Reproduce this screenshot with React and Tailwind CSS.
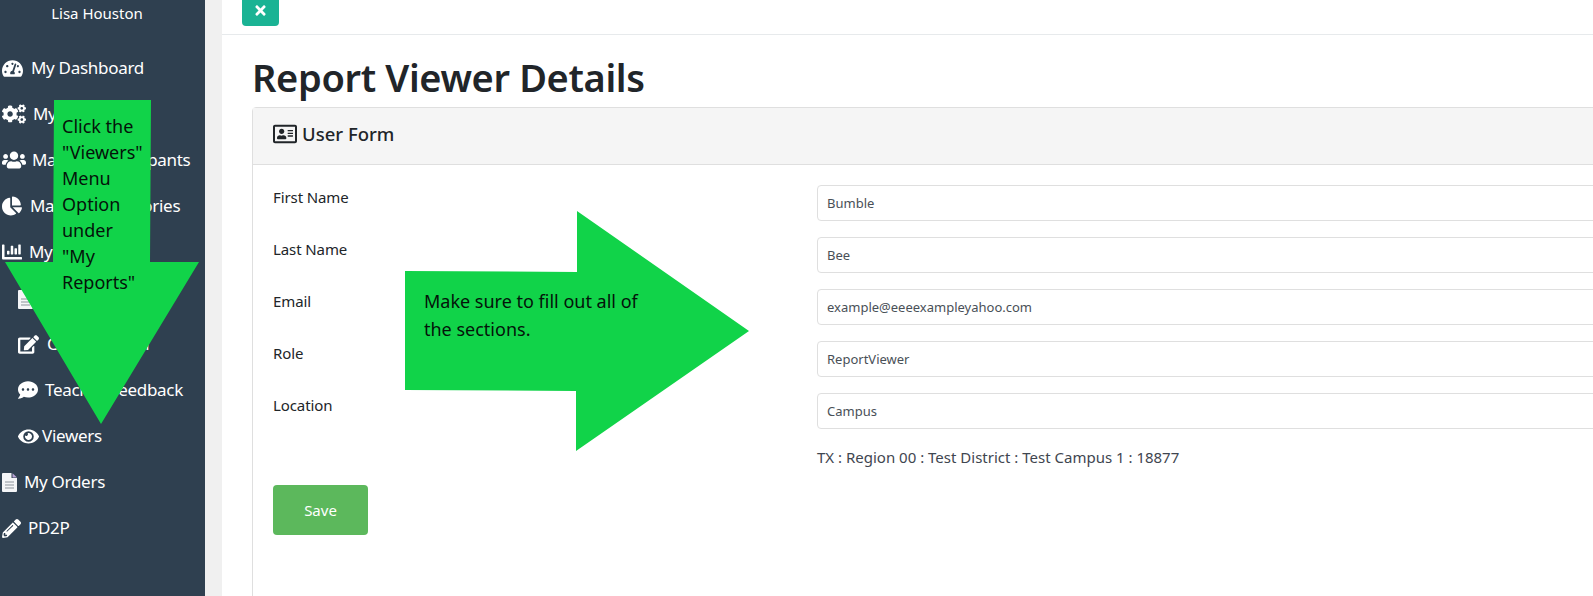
import {
  FaTachometerAlt,
  FaCogs,
  FaUsers,
  FaChartPie,
  FaChartBar,
  FaEdit,
  FaCommentDots,
  FaEye,
  FaPencilAlt,
  FaRegAddressCard,
  FaTimes,
} from "react-icons/fa";

const font = { fontFamily: '"Noto Sans", sans-serif' };

// file glyph in the reference: white sheet, grey lines, purple corner
const DocIcon = ({ className }) => (
  <svg viewBox="0 0 15 19" className={className}>
    <path d="M1 0h8.5v5H15v13a1 1 0 0 1-1 1H1a1 1 0 0 1-1-1V1a1 1 0 0 1 1-1z" fill="#f4f5f7" />
    <path d="M10.5 0.3L15 4.5h-4.5z" fill="#b9a3d6" />
    <path d="M3 9h9M3 12h9M3 15h9" stroke="#8b939b" strokeWidth="1.2" />
  </svg>
);

const navItems = [
  { label: "My Dashboard", Icon: FaTachometerAlt, size: "text-[21px]", gap: "gap-[8px]" },
  { label: "My Settings", Icon: FaCogs, size: "text-[24px]", gap: "gap-[7px]" },
  { label: "Manage Participants", Icon: FaUsers, size: "text-[24px]", gap: "gap-[6px]" },
  { label: "Manage Categories", Icon: FaChartPie, size: "text-[20px]", gap: "gap-[8px]" },
  { label: "My Reports", Icon: FaChartBar, size: "text-[20px]", gap: "gap-[7px]" },
  { label: "Reports", Icon: DocIcon, size: "mt-[3px] h-[19px] w-[15px]", gap: "gap-[10px]", sub: true },
  { label: "Conversation", Icon: FaEdit, size: "text-[21px]", gap: "gap-[8px]", sub: true },
  { label: "Teacher Feedback", Icon: FaCommentDots, size: "text-[20px]", gap: "gap-[7px]", sub: true },
  { label: "Viewers", Icon: FaEye, size: "text-[21px]", gap: "gap-[3px]", sub: true },
  { label: "My Orders", Icon: DocIcon, size: "h-[19px] w-[15px]", gap: "gap-[7px]" },
  { label: "PD2P", Icon: FaPencilAlt, size: "text-[19px]", gap: "gap-[7px]" },
];

const fields = [
  { label: "First Name", value: "Bumble" },
  { label: "Last Name", value: "Bee" },
  { label: "Email", value: "example@eeeexampleyahoo.com" },
  { label: "Role", value: "ReportViewer" },
  { label: "Location", value: "Campus" },
];

const App = () => {
  return (
    <div className="relative flex h-[596px] w-[1593px] overflow-hidden bg-[#f0f0f0]" style={font}>
      {/* Sidebar */}
      <aside className="w-[205px] shrink-0 bg-[#2f4050] text-white">
        <div className="pt-[3px] pr-[11px] text-center text-[15px] leading-[20px]">Lisa Houston</div>
        <nav className="mt-[22px] flex flex-col">
          {navItems.map(({ label, Icon, size, gap, sub }) => (
            <a
              key={label}
              className={`flex h-[46px] items-center ${gap} ${sub ? "pl-[18px]" : "pl-[2px]"} text-[17px] tracking-[-0.3px]`}
            >
              <Icon className={size} />
              <span>{label}</span>
            </a>
          ))}
        </nav>
      </aside>

      {/* Main */}
      <main className="ml-[17px] flex min-w-0 flex-1 flex-col bg-white text-[#212529]">
        <div className="h-[35px] shrink-0 border-b border-[#e7eaec] pl-[20px]">
          <button className="-mt-[10px] flex h-[36px] w-[37px] items-center justify-center rounded-[4px] bg-[#1ab394] text-white">
            <FaTimes className="mt-[5px] text-[15px]" />
          </button>
        </div>

        <div className="pl-[30px]">
          <h1 className="pt-[13px] pb-[1px] text-[38px] leading-[58px] font-semibold tracking-[-0.35px]">
            Report Viewer Details
          </h1>

          {/* Card */}
          <section className="w-[1400px] rounded-t-[4px] border border-[#dfdfdf]">
            <header className="flex h-[57px] items-center gap-[5px] border-b border-[#dfdfdf] bg-[#f5f5f5] pb-[5px] pl-[20px] text-[18.5px] font-medium">
              <FaRegAddressCard className="text-[24px]" />
              <span>User Form</span>
            </header>

            <div className="px-[20px] pt-[20px] pb-[120px]">
              <div className="flex flex-col gap-[16px]">
                {fields.map(({ label, value }) => (
                  <div key={label} className="grid grid-cols-[544px_1fr]">
                    <label className="pt-[1px] text-[15px] leading-[22px] tracking-[-0.1px]">{label}</label>
                    <input
                      readOnly
                      value={value}
                      className="h-[36px] w-full rounded-[4px] border border-[#dfdfdf] bg-white px-[9px] text-[13px] text-[#495057]"
                      style={font}
                    />
                  </div>
                ))}
              </div>
              <p className="mt-[17px] pl-[544px] text-[15px] leading-[22px] text-[#3f4650]">
                TX : Region 00 : Test District : Test Campus 1 : 18877
              </p>
              <button className="mt-[17px] h-[50px] w-[95px] rounded-[4px] bg-[#5cb85c] text-[15px] text-white">
                Save
              </button>
            </div>
          </section>
        </div>
      </main>

      {/* Callout arrows drawn over the screenshot */}
      <svg className="absolute top-0 left-0 h-[596px] w-[1593px]" viewBox="0 0 1593 596">
        <polygon points="54,100 151,100 150,262 199,262 101,424 5,262 53,262" fill="#11d349" />
        <polygon points="405,271 577,272 577,211 749,331 576,451 576,391 405,390" fill="#11d349" />
      </svg>
      <div className="absolute top-[113px] left-[62px] w-[90px] text-[18px] leading-[26px] text-[#04140a]">
        Click the
        <br />
        "Viewers"
        <br />
        Menu
        <br />
        Option
        <br />
        under
        <br />
        "My
        <br />
        Reports"
      </div>
      <div className="absolute top-[287px] left-[424px] w-[240px] text-[18px] leading-[28px] text-[#04140a]">
        Make sure to fill out all of the sections.
      </div>
    </div>
  );
};

export default App;
